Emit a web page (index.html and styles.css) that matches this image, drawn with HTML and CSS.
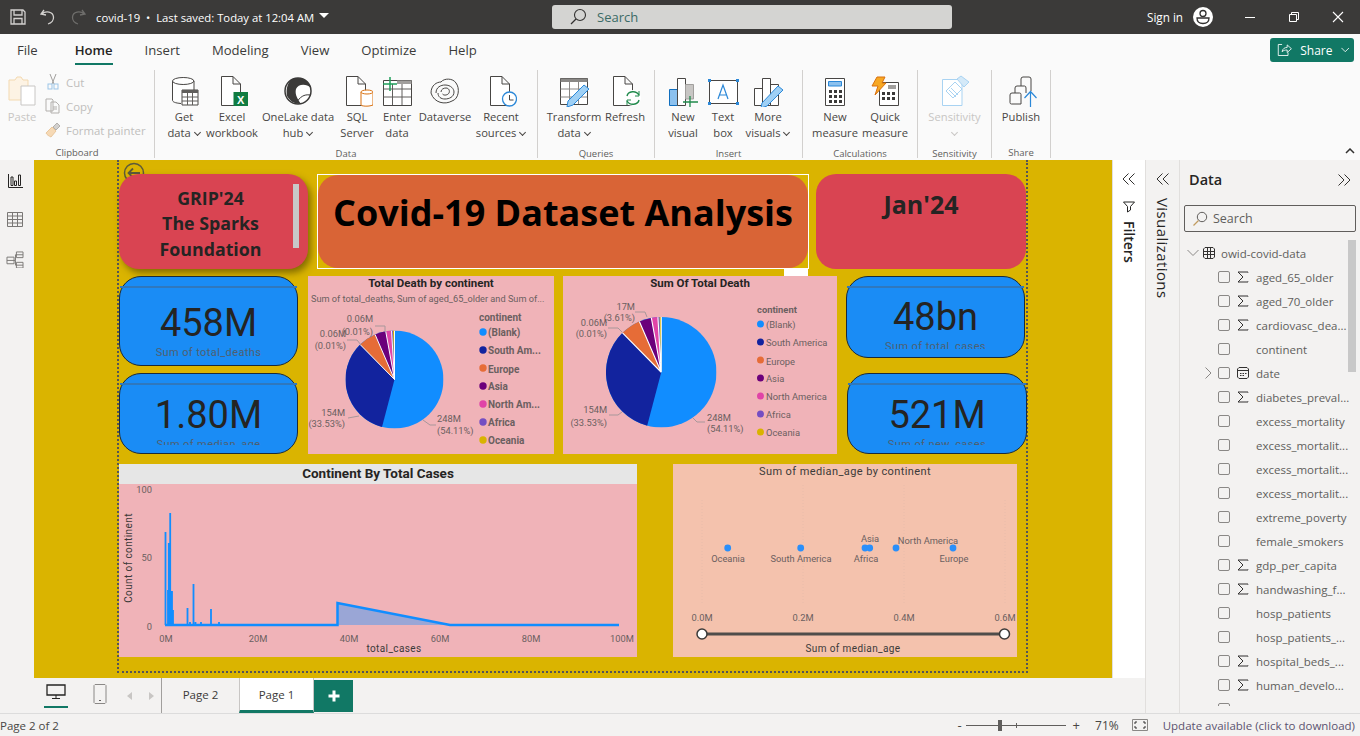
FILE: index.html
```html
<!DOCTYPE html>
<html lang="en">
<head>
  <meta charset="UTF-8" />
  <title>covid-19 - Power BI Desktop</title>
  <link rel="stylesheet" href="styles.css">
</head>
<body>
  <svg class="defs" width="0" height="0">
    <symbol id="pie" viewBox="-100 -100 200 200">
      <circle r="100" fill="#118dff"/>
      <path d="M0 0L-25.5 96.7A100 100 0 0 1-70.1-71.3Z" fill="#12239e"/>
      <path d="M0 0L-70.1-71.3A100 100 0 0 1-39.6-91.8Z" fill="#e66c37"/>
      <path d="M0 0L-39.6-91.8A100 100 0 0 1-17.9-98.4Z" fill="#6b007b"/>
      <path d="M0 0L-17.9-98.4A100 100 0 0 1-6.1-99.8Z" fill="#e044a7"/>
      <path d="M0 0L-6.1-99.8A100 100 0 0 1-3.1-99.9Z" fill="#744ec2"/>
      <path d="M0 0L-3.1-99.9A100 100 0 0 1 0-100Z" fill="#d9b300"/>
      <path d="M0-100V0M0 0L-70.1-71.3M0 0L-39.6-91.8M0 0L-17.9-98.4M0 0L-6.1-99.8" stroke="#fff" stroke-width="2" fill="none"/>
    </symbol>
    <symbol id="sigma" viewBox="0 0 12 12">
      <path d="M11 1.500V1H1L6 6L1 11H11V10.500" fill="none" stroke="#323130" stroke-width="1"/>
    </symbol>
    <symbol id="doc" viewBox="0 0 32 32">
      <path d="M4.500 1.500H16L23.500 9V30.500H4.500Z M16 1.500V9H23.500" fill="#fff" stroke="#484644"/>
    </symbol>
  </svg>

  <header class="titlebar">
    <div class="tb-left">
      <svg class="tb-icon" width="18" height="18" viewBox="0 0 18 18"><path d="M2 2H14L16 4V16H2ZM5 2V7H13V2M5 16V10.500H13V16" fill="none" stroke="#d2d0ce" stroke-width="1.300"/></svg>
      <svg class="tb-icon" width="18" height="18" viewBox="0 0 18 18"><path d="M5 2L2 6L7 7M2.500 6C7 2.500 14 3.500 14.500 9C14.800 12 12.500 15 9 16" fill="none" stroke="#d2d0ce" stroke-width="1.300"/></svg>
      <svg class="tb-icon" width="18" height="18" viewBox="0 0 18 18"><path d="M13 2L16 6L11 7M15.500 6C11 2.500 4 3.500 3.500 9C3.200 12 5.500 15 9 16" fill="none" stroke="#6e6d6b" stroke-width="1.300"/></svg>
      <span class="doc-name">covid-19 &nbsp;•&nbsp; Last saved: Today at 12:04 AM</span>
      <span class="caret"></span>
    </div>
    <div class="tb-search">
      <svg width="18" height="18" viewBox="0 0 18 18"><circle cx="11" cy="7" r="5.500" fill="none" stroke="#323130" stroke-width="1.100"/><path d="M7 11L2 16" stroke="#323130" stroke-width="1.300"/></svg>
      <span>Search</span>
    </div>
    <div class="tb-right">
      <span class="signin">Sign in</span>
      <svg class="avatar" width="20" height="20" viewBox="0 0 20 20"><circle cx="10" cy="10" r="10" fill="#fff"/><circle cx="10" cy="6.500" r="3" fill="none" stroke="#323130" stroke-width="1.300"/><path d="M4 11H16C16 15 13 16.500 10 16.500C7 16.500 4 15 4 11Z" fill="none" stroke="#323130" stroke-width="1.300"/></svg>
      <svg class="win-btn" width="12" height="12" viewBox="0 0 12 12"><path d="M1 6.500H11" stroke="#fff"/></svg>
      <svg class="win-btn" width="12" height="12" viewBox="0 0 12 12"><path d="M1.500 3.500H8.500V10.500H1.500ZM3.500 3.500V1.500H10.500V8.500H8.500" fill="none" stroke="#fff"/></svg>
      <svg class="win-btn" width="12" height="12" viewBox="0 0 12 12"><path d="M1 1L11 11M11 1L1 11" stroke="#fff" stroke-width="1.100"/></svg>
    </div>
  </header>

  <nav class="tabs">
    <span class="tab tab-file">File</span>
    <span class="tab tab-on">Home</span>
    <span class="tab">Insert</span>
    <span class="tab">Modeling</span>
    <span class="tab">View</span>
    <span class="tab">Optimize</span>
    <span class="tab">Help</span>
    <button class="share">
      <svg width="18" height="16" viewBox="0 0 18 16"><path d="M6 1.500H1.500V14.500H13V11M6 10C6.500 6.500 9 5 12 5V2L17 6.500L12 11V8C9.500 8 7.500 8.500 6 10Z" fill="none" stroke="#fff"/></svg>
      <span>Share</span>
      <svg width="10" height="6" viewBox="0 0 10 6"><path d="M.5.500L5 5L9.500.500" fill="none" stroke="#fff"/></svg>
    </button>
  </nav>

  <section class="ribbon">
    <div class="group group-clip">
      <div class="group-body clip-body">
        <div class="rb-btn off paste">
          <svg width="32" height="32" viewBox="0 0 32 32"><path d="M3 5H9L11 2H15L17 5H22V25H3Z" fill="#fdf3e4" stroke="#f3d9b0"/><path d="M15 11H29V30H15Z" fill="#fff" stroke="#c8c6c4"/></svg>
          <span>Paste</span>
        </div>
        <div class="small-list">
          <div class="small-btn"><svg width="16" height="18" viewBox="0 0 16 18"><path d="M5 1L9 11M11 1L7 11" stroke="#a19f9d" fill="none"/><rect x="3" y="11" width="4" height="5" fill="none" stroke="#9cc5e8"/><rect x="9" y="11" width="4" height="5" fill="none" stroke="#9cc5e8"/></svg><span>Cut</span></div>
          <div class="small-btn"><svg width="16" height="16" viewBox="0 0 16 16"><path d="M1 1H7L8 2V13H1ZM6 4H11L14 7V15H6Z M8 9H12M8 11H12" fill="#fafafa" stroke="#b3b0ad"/></svg><span>Copy</span></div>
          <div class="small-btn"><svg width="16" height="16" viewBox="0 0 16 16"><path d="M1 11L7 5L11 9L6 15C4 14 2 13 1 11Z" fill="#f6d9b5" stroke="#e9c79d"/><path d="M8 5L12 1L15 4L11 8Z" fill="#d2d0ce" stroke="#b3b0ad"/></svg><span>Format painter</span></div>
        </div>
      </div>
      <div class="group-name">Clipboard</div>
    </div>

    <div class="group group-data">
      <div class="group-body">
        <div class="rb-btn">
          <svg width="32" height="32" viewBox="0 0 32 32"><path d="M4.500 6V26H14V17H26V6Z" fill="#fff"/><path d="M4.500 6V25C4.500 27 7 28 13 28.500M26 6V15" fill="none" stroke="#484644"/><ellipse cx="15.200" cy="6" rx="10.700" ry="3.500" fill="#fff" stroke="#484644"/><path d="M14 15H30V30H14Z" fill="#fff" stroke="#484644"/><path d="M14 15H30V18H14Z" fill="#605e5c"/><path d="M19.500 18V30M24.500 18V30M14 22H30M14 26H30" stroke="#605e5c"/></svg>
          <span>Get</span><span>data <i class="chev"></i></span>
        </div>
        <div class="rb-btn">
          <svg width="32" height="32" viewBox="0 0 32 32"><use href="#doc" x="1"/><rect x="17.500" y="17" width="14.500" height="14" fill="#107c41"/><text x="24.700" y="28.500" class="xl-x">X</text></svg>
          <span>Excel</span><span>workbook</span>
        </div>
        <div class="rb-btn">
          <svg width="32" height="32" viewBox="0 0 32 32"><circle cx="16" cy="16" r="13" fill="#fff" stroke="#3b3a39" stroke-width="1.500"/><path d="M9 5C15 1 26 3 29 13C24 8 16 9 14 14C13 18 14 22 19 29C12 29 8 26 5 21C4 15 5 9 9 5Z" fill="#3b3a39"/><path d="M14 28C18 22 22 19 28 20" fill="none" stroke="#3b3a39"/></svg>
          <span>OneLake data</span><span>hub <i class="chev"></i></span>
        </div>
        <div class="rb-btn">
          <svg width="32" height="32" viewBox="0 0 32 32"><use href="#doc" x="1"/><path d="M20 17V30C20 31 27 32 32 30V17" fill="#fff" stroke="#d9700f"/><ellipse cx="26" cy="17" rx="6" ry="2" fill="#fff" stroke="#d9700f"/></svg>
          <span>SQL</span><span>Server</span>
        </div>
        <div class="rb-btn">
          <svg width="32" height="32" viewBox="0 0 32 32"><path d="M2.500 5.500H30.500V30.500H2.500Z" fill="#fff" stroke="#484644"/><path d="M11.500 9V30M21 5.500V30M2.500 14H30M2.500 22H30" stroke="#605e5c"/><path d="M16 5.500H30.500V9H16Z" fill="#a19f9d"/><path d="M9 2V16M2 9H16" stroke="#1e9e5a" stroke-width="1.500"/></svg>
          <span>Enter</span><span>data</span>
        </div>
        <div class="rb-btn">
          <svg width="32" height="32" viewBox="0 0 32 32"><g fill="none" stroke="#484644"><path d="M2 18C2 10 8 7 12 7C15 3 24 3 27 8C31 13 30 24 23 26C16 30 5 28 2 18Z"/><path d="M7 18C7 12 12 10 16 10C22 10 25 14 25 17C25 22 20 24 16 24C12 24 9 22 9 18"/><path d="M12 17C12 14 15 13 17 13C20 13 21 16 20 18C19 20 15 21 13.500 19"/></g></svg>
          <span>Dataverse</span>
        </div>
        <div class="rb-btn">
          <svg width="32" height="32" viewBox="0 0 32 32"><use href="#doc" x="1"/><circle cx="24.500" cy="24" r="7" fill="#fff" stroke="#2b88d8" stroke-width="1.300"/><path d="M24.500 20V25H28.500" fill="none" stroke="#484644"/></svg>
          <span>Recent</span><span>sources <i class="chev"></i></span>
        </div>
      </div>
      <div class="group-name">Data</div>
    </div>

    <div class="group group-queries">
      <div class="group-body">
        <div class="rb-btn">
          <svg width="32" height="32" viewBox="0 0 32 32"><path d="M2.500 3.500H29.500V29.500H2.500Z" fill="#fff" stroke="#484644"/><path d="M2.500 3.500H29.500V7H2.500Z" fill="#8a8886"/><path d="M11.500 7V29M20.500 7V29M2.500 14H29M2.500 22H29" stroke="#8a8886"/><path d="M10 26L26 10L31 14L15 30L9 32Z" fill="#9fd0f5" stroke="#2b88d8"/></svg>
          <span>Transform</span><span>data <i class="chev"></i></span>
        </div>
        <div class="rb-btn">
          <svg width="32" height="32" viewBox="0 0 32 32"><use href="#doc"/><circle cx="24" cy="23" r="7" fill="#fff" stroke="#fff" stroke-width="2"/><path d="M18 21C19 16 27 15 30 20M30 25C29 30 21 31 18 26" fill="none" stroke="#218a4c" stroke-width="1.400"/><path d="M30 16V21H26M18 30V25H22" fill="none" stroke="#218a4c"/></svg>
          <span>Refresh</span>
        </div>
      </div>
      <div class="group-name">Queries</div>
    </div>

    <div class="group group-insert">
      <div class="group-body">
        <div class="rb-btn">
          <svg width="32" height="32" viewBox="0 0 32 32"><path d="M2.500 14.500H10.500V30.500H2.500Z" fill="#8cc1ee" stroke="#106ebe"/><path d="M10.500 3.500H18.500V30.500H10.500Z" fill="#fff" stroke="#484644"/><path d="M18.500 9.500H26.500V24H18.500Z" fill="#c8c6c4" stroke="#a19f9d"/><path d="M23 21V33M16 27H31" stroke="#218a4c" stroke-width="1.300"/></svg>
          <span>New</span><span>visual</span>
        </div>
        <div class="rb-btn">
          <svg width="32" height="32" viewBox="0 0 32 32"><path d="M2.500 5.500H30.500V28.500H2.500Z" fill="#fff" stroke="#484644"/><path d="M1 4H4V7H1ZM29 4H32V7H29ZM1 27H4V30H1ZM29 27H32V30H29Z" fill="#2b88d8"/><path d="M11 24L16 10L21 24M12.500 20H19.500" fill="none" stroke="#2b88d8" stroke-width="1.200"/></svg>
          <span>Text</span><span>box</span>
        </div>
        <div class="rb-btn">
          <svg width="32" height="32" viewBox="0 0 32 32"><path d="M2.500 13.500H10.500V30.500H2.500ZM10.500 3.500H18.500V30.500H10.500ZM18.500 9.500H26.500V30.500H18.500Z" fill="#fff" stroke="#484644"/><path d="M10 28L26 11L31 15L15 31L9 33Z" fill="#9fd0f5" stroke="#2b88d8"/></svg>
          <span>More</span><span>visuals <i class="chev"></i></span>
        </div>
      </div>
      <div class="group-name">Insert</div>
    </div>

    <div class="group group-calc">
      <div class="group-body">
        <div class="rb-btn">
          <svg width="32" height="32" viewBox="0 0 32 32"><path d="M6.500 3.500H25.500V30.500H6.500Z" fill="#fff" stroke="#484644"/><path d="M9.500 6.500H22.500V11H9.500Z" fill="#8cc1ee" stroke="#2b88d8"/><path d="M10 15H13V18H10ZM15 15H18V18H15ZM20 15H23V18H20ZM10 20H13V23H10ZM15 20H18V23H15ZM20 20H23V23H20ZM10 25H13V28H10ZM15 25H18V28H15ZM20 25H23V28H20Z" fill="#3b3a39"/></svg>
          <span>New</span><span>measure</span>
        </div>
        <div class="rb-btn">
          <svg width="32" height="32" viewBox="0 0 32 32"><path d="M10.500 7.500H29.500V30.500H10.500Z" fill="#fff" stroke="#484644"/><path d="M19 10H27V14H19Z" fill="#a19f9d"/><path d="M13 17H16V20H13ZM18 17H21V20H18ZM23 17H26V20H23ZM13 22H16V25H13ZM18 22H21V25H18ZM23 22H26V25H23Z" fill="#3b3a39"/><path d="M8 2H16L13 8H17L6 20L9 11H3Z" fill="#f7a823" stroke="#d9700f"/></svg>
          <span>Quick</span><span>measure</span>
        </div>
      </div>
      <div class="group-name">Calculations</div>
    </div>

    <div class="group group-sens">
      <div class="group-body">
        <div class="rb-btn off">
          <svg width="32" height="32" viewBox="0 0 32 32"><path d="M3.500 4.500H23V30.500H3.500Z" fill="#fff" stroke="#a9d3f2"/><path d="M7 16L16 7L23 14L14 23ZM10 15L17 22M12 13L19 20" fill="none" stroke="#a9d3f2"/><path d="M18 4L22 1L30 7L25 12Z" fill="#d4e9f8" stroke="#a9d3f2"/></svg>
          <span>Sensitivity</span><span><i class="chev"></i></span>
        </div>
      </div>
      <div class="group-name">Sensitivity</div>
    </div>

    <div class="group group-share">
      <div class="group-body">
        <div class="rb-btn">
          <svg width="32" height="32" viewBox="0 0 32 32"><path d="M7 18H14.500Q16 18 16 19.500V29H6.500Q5 29 5 27.500V20Q5 18 7 18ZM10 18V13Q10 11 12 11H19.500Q21 11 21 13V18M16 11V4Q16 2 18 2H24Q26 2 26 4V16" fill="none" stroke="#484644"/><path d="M25.500 32V17M19.500 23L25.500 16.500L31.500 23" fill="none" stroke="#2b88d8" stroke-width="1.200"/></svg>
          <span>Publish</span>
        </div>
      </div>
      <div class="group-name">Share</div>
    </div>

    <svg class="collapse" width="10" height="6" viewBox="0 0 10 6"><path d="M1 5L5 1L9 5" fill="none" stroke="#323130" stroke-width="1.500"/></svg>
  </section>

  <main class="workspace">
    <div class="report-area">
      <div class="report-row">
        <aside class="rail">
          <svg width="15" height="14" viewBox="0 0 15 14"><path d="M.5 0V13.500H15M3 3H5V11.500H3ZM6.500 7H8.500V11.500H6.500ZM10.500 1H12.500V11.500H10.500Z" fill="none" stroke="#252423"/></svg>
          <svg width="16" height="15" viewBox="0 0 16 15"><path d="M.5.500H15.500V14.500H.5ZM.5 4H15.500M.5 7.500H15.500M.5 11H15.500M5.500.5V14.500M10.500.5V14.500" fill="none" stroke="#797775"/></svg>
          <svg width="18" height="17" viewBox="0 0 18 18"><path d="M.5 6.500H8V13.500H.5ZM.5 10H8M10.500 1H17.500V7H10.500ZM10.500 4H17.500M10.500 12H17.500V18H10.500ZM10.500 15H17.500M8 10H9.500V4H10.500M9.500 10V15H10.500" fill="none" stroke="#797775"/></svg>
        </aside>

        <div class="canvas">
          <div class="report">
            <svg class="back-btn" width="22" height="22" viewBox="0 0 22 22"><circle cx="11" cy="11" r="9.500" fill="none" stroke="#5c5a3a" stroke-width="1.500"/><path d="M17 11H6M10 6.500L5.500 11L10 15.500" fill="none" stroke="#5c5a3a" stroke-width="1.800"/></svg>

            <div class="row row-top">
              <div class="banner banner-grip">
                <p>GRIP'24</p>
                <p>The Sparks</p>
                <p>Foundation</p>
                <span class="scroll-thumb"></span>
              </div>
              <div class="banner-title">
                <h1>Covid-19 Dataset Analysis</h1>
                <span class="resize-tab"></span>
              </div>
              <div class="banner banner-date"><p>Jan'24</p></div>
            </div>

            <div class="row row-mid">
              <div class="kpi-col kpi-col-l">
                <div class="kpi kpi-a"><div class="kpi-body"><div class="kpi-num">458M</div><div class="kpi-label">Sum of total_deaths</div></div></div>
                <div class="kpi kpi-b"><div class="kpi-body"><div class="kpi-num">1.80M</div><div class="kpi-label">Sum of median_age</div></div></div>
              </div>

              <svg class="panel panel-pie1" viewBox="308 276 246 178" width="246" height="178">
                <text x="431" y="287" class="ch-title">Total Death by continent</text>
                <text x="311" y="302" class="ch-sub">Sum of total_deaths, Sum of aged_65_older and Sum of...</text>
                <use href="#pie" x="345.500" y="330.500" width="98" height="98"/>
                <g class="leader">
                  <path d="M375 326H385V332"/><path d="M347 340H357L361 345"/>
                  <path d="M348 418L359 416"/><path d="M423 420L430 425H436"/>
                </g>
                <g class="lbl lbl-end">
                  <text x="373" y="322">0.06M</text><text x="373" y="335">(0.01%)</text>
                  <text x="346" y="337">0.06M</text><text x="346" y="349">(0.01%)</text>
                  <text x="345" y="416">154M</text><text x="345" y="427">(33.53%)</text>
                </g>
                <g class="lbl">
                  <text x="437" y="422">248M</text><text x="437" y="434">(54.11%)</text>
                </g>
                <g class="legend legend-bold">
                  <text x="479" y="321" class="lg-head">continent</text>
                  <circle cx="483" cy="332" r="3.700" fill="#118dff"/><text x="488" y="336">(Blank)</text>
                  <circle cx="483" cy="350" r="3.700" fill="#12239e"/><text x="488" y="354">South Am...</text>
                  <circle cx="483" cy="368" r="3.700" fill="#e66c37"/><text x="488" y="373">Europe</text>
                  <circle cx="483" cy="386" r="3.700" fill="#6b007b"/><text x="488" y="390">Asia</text>
                  <circle cx="483" cy="404" r="3.700" fill="#e044a7"/><text x="488" y="408">North Am...</text>
                  <circle cx="483" cy="422" r="3.700" fill="#744ec2"/><text x="488" y="426">Africa</text>
                  <circle cx="483" cy="440" r="3.700" fill="#d9b300"/><text x="488" y="444">Oceania</text>
                </g>
              </svg>

              <svg class="panel panel-pie2" viewBox="563 276 274 178" width="274" height="178">
                <text x="700" y="287" class="ch-title">Sum Of Total Death</text>
                <use href="#pie" x="606" y="317" width="110.500" height="110.500"/>
                <g class="leader">
                  <path d="M635 312H645L647 317"/><path d="M608 328H618L622 332"/>
                  <path d="M609 415H618L622 412"/><path d="M693 418L697 422H705"/>
                </g>
                <g class="lbl lbl-end">
                  <text x="635" y="310">17M</text><text x="635" y="321">(3.61%)</text>
                  <text x="607" y="326">0.06M</text><text x="607" y="337">(0.01%)</text>
                  <text x="607" y="413">154M</text><text x="607" y="426">(33.53%)</text>
                </g>
                <g class="lbl">
                  <text x="707" y="421">248M</text><text x="707" y="432">(54.11%)</text>
                </g>
                <g class="legend legend-plain">
                  <text x="757" y="313" class="lg-head">continent</text>
                  <circle cx="760.500" cy="324" r="3.500" fill="#118dff"/><text x="766" y="328">(Blank)</text>
                  <circle cx="760.500" cy="342" r="3.500" fill="#12239e"/><text x="766" y="346">South America</text>
                  <circle cx="760.500" cy="360" r="3.500" fill="#e66c37"/><text x="766" y="365">Europe</text>
                  <circle cx="760.500" cy="378" r="3.500" fill="#6b007b"/><text x="766" y="382">Asia</text>
                  <circle cx="760.500" cy="396" r="3.500" fill="#e044a7"/><text x="766" y="400">North America</text>
                  <circle cx="760.500" cy="414" r="3.500" fill="#744ec2"/><text x="766" y="418">Africa</text>
                  <circle cx="760.500" cy="432" r="3.500" fill="#d9b300"/><text x="766" y="436">Oceania</text>
                </g>
              </svg>

              <div class="kpi-col kpi-col-r">
                <div class="kpi kpi-c"><div class="kpi-body"><div class="kpi-num">48bn</div><div class="kpi-label">Sum of total_cases</div></div></div>
                <div class="kpi kpi-d"><div class="kpi-body"><div class="kpi-num">521M</div><div class="kpi-label">Sum of new_cases</div></div></div>
              </div>
            </div>

            <div class="row row-bottom">
              <div class="line-card">
                <div class="line-head">Continent By Total Cases</div>
                <svg class="line-plot" viewBox="119 484 518 173" width="518" height="173">
                  <g class="lbl lbl-end">
                    <text x="152" y="493">100</text><text x="152" y="561">50</text><text x="152" y="630">0</text>
                  </g>
                  <text transform="translate(132 558) rotate(-90)" class="axis-name">Count of continent</text>
                  <path d="M337.500 603L450 625H337.500Z" fill="#9aa6d6"/>
                  <path d="M165.500 625V532M168 625V590M168.800 625V543M170.200 625V513M172 625V591M173 625V610M187.500 625V608M190 625V622M193.500 625V584M195.500 625V622M201 625V622M211 625V609M219 625V622" fill="none" stroke="#118dff" stroke-width="1.800"/>
                  <path d="M165 625H337.500V603L450 625H619" fill="none" stroke="#118dff" stroke-width="2.500"/>
                  <g class="lbl lbl-mid">
                    <text x="166" y="642">0M</text><text x="258" y="642">20M</text><text x="349" y="642">40M</text><text x="440" y="642">60M</text><text x="531" y="642">80M</text><text x="622" y="642">100M</text>
                  </g>
                  <text x="394" y="652" class="axis-name">total_cases</text>
                </svg>
              </div>

              <svg class="scatter" viewBox="673 464 344 193" width="344" height="193">
                <text x="845" y="475" class="scatter-title">Sum of median_age by continent</text>
                <path d="M702 500V605M803 485V605M904 485V605M1005 500V605" class="grid-dots"/>
                <g fill="#2a8ffa">
                  <circle cx="727.700" cy="548" r="3.400"/><circle cx="800.700" cy="548" r="3.400"/><circle cx="865" cy="548" r="3.400"/><circle cx="869.700" cy="548" r="3.400"/><circle cx="896" cy="548" r="3.400"/><circle cx="953" cy="548" r="3.400"/>
                </g>
                <g class="lbl lbl-mid">
                  <text x="728" y="562">Oceania</text><text x="801" y="562">South America</text><text x="866" y="562">Africa</text><text x="870" y="542">Asia</text><text x="928" y="544">North America</text><text x="954" y="562">Europe</text>
                  <text x="702" y="621">0.0M</text><text x="803" y="621">0.2M</text><text x="904" y="621">0.4M</text><text x="1005" y="621">0.6M</text>
                </g>
                <path d="M702 634H1004" stroke="#4f4d4b" stroke-width="3"/>
                <circle cx="702" cy="634" r="5" fill="#fff" stroke="#3b3a39" stroke-width="1.500"/>
                <circle cx="1004.500" cy="634" r="5" fill="#fff" stroke="#3b3a39" stroke-width="1.500"/>
                <text x="853" y="652" class="axis-name">Sum of median_age</text>
              </svg>
            </div>
          </div>
        </div>

        <aside class="filters">
          <svg class="dbl" width="14" height="12" viewBox="0 0 14 12"><path d="M6.500.5L1 6L6.500 11.500M12.500.5L7 6L12.500 11.500" fill="none" stroke="#323130"/></svg>
          <svg class="funnel" width="12" height="12" viewBox="0 0 12 12"><path d="M.5 1H11.500L7.500 5.500V9L4.500 11V5.500Z" fill="none" stroke="#252423"/></svg>
          <span class="side-label">Filters</span>
        </aside>
      </div>

      <div class="pagebar">
        <div class="view-switch view-on">
          <svg width="20" height="16" viewBox="0 0 20 16"><path d="M1 1H19V11H1Z" fill="none" stroke="#252423" stroke-width="1.300"/><path d="M10 11V14M6 14.500H14" stroke="#252423"/></svg>
        </div>
        <div class="view-switch">
          <svg width="14" height="20" viewBox="0 0 14 20"><path d="M2 .5H12L13 1.500V18.500L12 19.500H2L1 18.500V1.500Z" fill="none" stroke="#8a8886"/><path d="M6 16H8V17H6Z" fill="#605e5c"/></svg>
        </div>
        <div class="page-arrows"><i class="arrow-l"></i><i class="arrow-r"></i></div>
        <div class="page-tab">Page 2</div>
        <div class="page-tab page-tab-on">Page 1</div>
        <div class="page-add">
          <svg width="12" height="12" viewBox="0 0 12 12"><path d="M6 .5V11.500M.5 6H11.500" stroke="#fff" stroke-width="3"/></svg>
        </div>
      </div>
    </div>

    <aside class="viz-pane">
      <svg class="dbl" width="14" height="12" viewBox="0 0 14 12"><path d="M6.500.5L1 6L6.500 11.500M12.500.5L7 6L12.500 11.500" fill="none" stroke="#323130"/></svg>
      <span class="side-label">Visualizations</span>
    </aside>

    <aside class="data-pane">
      <div class="data-head">
        <span>Data</span>
        <svg width="14" height="12" viewBox="0 0 14 12"><path d="M1.500.5L7 6L1.500 11.500M7.500.5L13 6L7.500 11.500" fill="none" stroke="#323130"/></svg>
      </div>
      <div class="data-search">
        <svg width="16" height="16" viewBox="0 0 16 16"><circle cx="10" cy="6" r="4.700" fill="none" stroke="#605e5c"/><path d="M6.500 9.500L1.500 14.500" stroke="#c19c5f" stroke-width="1.200"/></svg>
        <span>Search</span>
      </div>
      <div class="tree">
        <div class="tree-root">
          <svg width="12" height="8" viewBox="0 0 12 8"><path d="M.5 1L6 6.500L11.500 1" fill="none" stroke="#8a8886"/></svg>
          <svg width="12" height="12" viewBox="0 0 12 12"><path d="M2 .5H10L11.500 2V10L10 11.500H2L.5 10V2ZM4.500.5V11.500M7.500.5V11.500M.5 4.500H11.500M.5 7.500H11.500" fill="none" stroke="#323130"/></svg>
          <span>owid-covid-data</span>
        </div>
        <div class="field"><i></i><b class="box"></b><svg class="fi" width="12" height="12"><use href="#sigma"/></svg><span>aged_65_older</span></div>
        <div class="field"><i></i><b class="box"></b><svg class="fi" width="12" height="12"><use href="#sigma"/></svg><span>aged_70_older</span></div>
        <div class="field"><i></i><b class="box"></b><svg class="fi" width="12" height="12"><use href="#sigma"/></svg><span>cardiovasc_dea...</span></div>
        <div class="field"><i></i><b class="box"></b><u></u><span>continent</span></div>
        <div class="field">
          <i><svg width="7" height="12" viewBox="0 0 7 12"><path d="M.5.5L6 6L.5 11.500" fill="none" stroke="#8a8886"/></svg></i>
          <b class="box"></b>
          <svg class="fi" width="12" height="12" viewBox="0 0 12 12"><path d="M2 .5H10L11.500 2V10L10 11.500H2L.5 10V2ZM.5 3.500H11.500" fill="none" stroke="#323130"/><path d="M3 6H4.500V7H3ZM5.500 6H7V7H5.500ZM8 6H9.500V7H8ZM3 8H4.500V9H3ZM5.500 8H7V9H5.500Z" fill="#323130"/></svg>
          <span>date</span>
        </div>
        <div class="field"><i></i><b class="box"></b><svg class="fi" width="12" height="12"><use href="#sigma"/></svg><span>diabetes_preval...</span></div>
        <div class="field"><i></i><b class="box"></b><u></u><span>excess_mortality</span></div>
        <div class="field"><i></i><b class="box"></b><u></u><span>excess_mortalit...</span></div>
        <div class="field"><i></i><b class="box"></b><u></u><span>excess_mortalit...</span></div>
        <div class="field"><i></i><b class="box"></b><u></u><span>excess_mortalit...</span></div>
        <div class="field"><i></i><b class="box"></b><u></u><span>extreme_poverty</span></div>
        <div class="field"><i></i><b class="box"></b><u></u><span>female_smokers</span></div>
        <div class="field"><i></i><b class="box"></b><svg class="fi" width="12" height="12"><use href="#sigma"/></svg><span>gdp_per_capita</span></div>
        <div class="field"><i></i><b class="box"></b><svg class="fi" width="12" height="12"><use href="#sigma"/></svg><span>handwashing_f...</span></div>
        <div class="field"><i></i><b class="box"></b><u></u><span>hosp_patients</span></div>
        <div class="field"><i></i><b class="box"></b><u></u><span>hosp_patients_...</span></div>
        <div class="field"><i></i><b class="box"></b><svg class="fi" width="12" height="12"><use href="#sigma"/></svg><span>hospital_beds_...</span></div>
        <div class="field"><i></i><b class="box"></b><svg class="fi" width="12" height="12"><use href="#sigma"/></svg><span>human_develo...</span></div>
        <div class="field"><i></i><b class="box"></b><u></u><span></span></div>
      </div>
      <span class="tree-scroll"></span>
    </aside>
  </main>

  <footer class="statusbar">
    <span>Page 2 of 2</span>
    <div class="status-right">
      <span class="zoom-minus">-</span>
      <div class="zoom-track"><i class="zoom-tick"></i><i class="zoom-thumb"></i></div>
      <span class="zoom-plus">+</span>
      <span class="zoom-val">71%</span>
      <svg width="16" height="12" viewBox="0 0 16 12"><path d="M.5.5H15.500V11.500H.5Z" fill="none" stroke="#8a8886"/><path d="M5 3H3V5M11 3H13V5M5 9H3V7M11 9H13V7" fill="none" stroke="#323130"/></svg>
      <span class="update">Update available (click to download)</span>
    </div>
  </footer>
</body>
</html>
```

FILE: styles.css
```css
* {
  box-sizing: border-box;
}

html, body {
  margin: 0;
  height: 736px;
  overflow: hidden;
}

body {
  font-family: "Open Sans", "Noto Sans", sans-serif;
  font-size: 12px;
  color: #252423;
  background: #f3f2f1;
}

p, h1 {
  margin: 0;
}

.defs {
  position: absolute;
}

/* title bar */
.titlebar {
  display: flex;
  align-items: center;
  height: 34px;
  background: #3b3a39;
  color: #fff;
}

.tb-left {
  display: flex;
  align-items: center;
  width: 552px;
  padding-left: 9px;
}

.tb-icon {
  margin-right: 12px;
}

.doc-name {
  margin-left: -3px;
  font-size: 11.3px;
  white-space: nowrap;
}

.caret {
  width: 0;
  height: 0;
  margin: -3px 0 0 5px;
  border-left: 5px solid transparent;
  border-right: 5px solid transparent;
  border-top: 5px solid #fff;
}

.tb-search {
  display: flex;
  align-items: center;
  gap: 10px;
  width: 400px;
  height: 24px;
  padding-left: 17px;
  background: #d4d4d2;
  border-radius: 3px;
  color: #3b6b66;
  font-size: 13px;
}

.tb-right {
  display: flex;
  align-items: center;
  flex: 1;
  padding-left: 195px;
}

.signin {
  font-size: 11.7px;
  white-space: nowrap;
}

.avatar {
  margin-left: 10px;
  flex: none;
}

.win-btn {
  margin-left: 32px;
  flex: none;
}

.avatar + .win-btn {
  margin-left: 31px;
}

/* tabs */
.tabs {
  display: flex;
  align-items: flex-start;
  gap: 32px;
  height: 34px;
  padding: 6px 6px 0 17px;
  background: #fafafa;
}

.tab {
  height: 25px;
  line-height: 20px;
  font-size: 13.1px;
  color: #3b3a39;
}

.tab-file {
  margin-right: 5px;
}

.tab-on {
  color: #252423;
  font-weight: 600;
  border-bottom: 2px solid #117865;
}

.share {
  display: flex;
  align-items: center;
  gap: 8px;
  margin: -2px 0 0 auto;
  width: 84px;
  height: 24px;
  padding: 0 5px 0 7px;
  border: 0;
  border-radius: 3px;
  background: #117865;
  color: #fff;
  font: 12px "Open Sans", sans-serif;
}

/* ribbon */
.ribbon {
  position: relative;
  display: flex;
  height: 92px;
  padding-top: 2px;
  background: #fafafa;
}

.group {
  display: flex;
  flex-direction: column;
  height: 88px;
  border-right: 1px solid #d2d0ce;
}

.group-body {
  flex: 1;
  display: grid;
  grid-auto-flow: column;
  align-items: start;
  padding-top: 5px;
}

.group-name {
  height: 18px;
  line-height: 26px;
  text-align: center;
  font-size: 9.5px;
  color: #605e5c;
}

.group-clip { width: 155px; }
.group-data { width: 383px; }
.group-queries { width: 117px; }
.group-insert { width: 148px; }
.group-calc { width: 115px; }
.group-sens { width: 74px; }
.group-share { width: 59px; }

.group-data .group-body {
  grid-template-columns: 38px 58px 74px 44px 36px 60px 52px;
  padding-left: 10px;
}

.group-queries .group-body {
  grid-template-columns: 72px 30px;
}

.group-insert .group-body {
  grid-template-columns: 40px 40px 50px;
  padding-left: 8px;
}

.group-calc .group-body {
  grid-template-columns: 50px 50px;
  padding-left: 7px;
}

.group-sens .group-body {
  grid-template-columns: 73px;
}

.group-share .group-body {
  grid-template-columns: 58px;
}

.clip-body {
  display: flex;
  padding-left: 6px;
}

.rb-btn {
  display: flex;
  flex-direction: column;
  align-items: center;
  line-height: 16px;
  font-size: 11.2px;
  color: #484644;
  white-space: nowrap;
}

.rb-btn svg {
  flex: none;
  margin-bottom: 2px;
}

.rb-btn.off {
  color: #c8c6c4;
}

.xl-x {
  font: 700 11px "Liberation Sans", sans-serif;
  fill: #fff;
  text-anchor: middle;
}

.paste {
  width: 32px;
}

.chev {
  display: inline-block;
  width: 5px;
  height: 5px;
  margin: 0 1px 2px 1px;
  border-right: 1px solid currentColor;
  border-bottom: 1px solid currentColor;
  transform: rotate(45deg);
}

.small-list {
  display: flex;
  flex-direction: column;
  gap: 6px;
  margin: -2px 0 0 7px;
  color: #c0bebc;
  font-size: 11.4px;
}

.small-btn {
  display: flex;
  align-items: center;
  gap: 5px;
  height: 18px;
  white-space: nowrap;
}

.collapse {
  position: absolute;
  right: 5px;
  bottom: 6px;
}

/* workspace */
.workspace {
  display: flex;
  height: 553px;
}

.report-area {
  width: 1145px;
  display: flex;
  flex-direction: column;
}

.report-row {
  display: flex;
  height: 518px;
}

.rail {
  display: flex;
  flex-direction: column;
  align-items: center;
  gap: 24px;
  width: 34px;
  padding: 14px 4px 0 0;
  background: #f3f2f1;
}

.canvas {
  width: 1078px;
  padding-left: 83px;
  background: #dab400;
  overflow: hidden;
}

.report {
  position: relative;
  width: 911px;
  height: 513px;
  padding-top: 14px;
  border-left: 2px dotted #555;
  border-right: 2px dotted #555;
  border-bottom: 2px dotted #555;
}

.back-btn {
  position: absolute;
  left: 4px;
  top: 2px;
}

.row {
  position: relative;
  display: flex;
}

.row-top {
  height: 95px;
  margin-bottom: 7px;
}

.row-mid {
  height: 178px;
  margin-bottom: 10px;
}

.row-bottom {
  height: 193px;
  gap: 36px;
}

.banner {
  position: relative;
  border-radius: 20px;
  background: #d94452;
  font-weight: 700;
  text-align: center;
  color: #252423;
}

.banner-grip {
  width: 189px;
  margin-right: 9px;
  padding: 12px 6px 0 0;
  font-size: 17.8px;
  line-height: 25.4px;
  box-shadow: 3px 4px 7px rgba(60, 50, 0, 0.55);
}

.banner-date {
  width: 210px;
  padding-top: 13px;
  font-size: 25px;
  line-height: 34px;
}

.scroll-thumb {
  position: absolute;
  right: 9px;
  top: 10px;
  width: 6px;
  height: 64px;
  background: #c8c8c8;
}

.banner-title {
  position: relative;
  width: 492px;
  margin-right: 7px;
  border: 1px solid #fff;
}

.banner-title h1 {
  height: 100%;
  padding-top: 12px;
  border-radius: 20px;
  background: #d96436;
  font-size: 36px;
  line-height: 52px;
  font-weight: 700;
  text-align: center;
  color: #000;
  white-space: nowrap;
}

.resize-tab {
  position: absolute;
  right: 0;
  bottom: -8px;
  width: 24px;
  height: 7px;
  background: #fff;
}

/* kpi cards */
.kpi-col {
  display: flex;
  flex-direction: column;
  justify-content: space-between;
  width: 180px;
}

.kpi-col-l {
  width: 179px;
  margin-right: 10px;
}

.kpi-col-r {
  margin-left: 9px;
}

.kpi {
  width: 179px;
  background: #1a8cf5;
  border: 1px solid #1b2a38;
  border-radius: 22px;
  text-align: center;
}

.kpi::before {
  content: "";
  display: block;
  height: 2px;
  margin-top: 9px;
  background: #2f78bd;
}

.kpi-body {
  overflow: hidden;
}

.kpi-num {
  height: 44px;
  line-height: 44px;
  font-family: Roboto, sans-serif;
  font-size: 38px;
  color: #252423;
}

.kpi-label {
  height: 16px;
  line-height: 16px;
  font-family: Roboto, sans-serif;
  font-size: 11px;
  letter-spacing: 0.4px;
  color: #4f5f70;
}

.kpi-a { height: 90px; }
.kpi-a .kpi-body { margin-top: 13px; height: 60px; }
.kpi-b { height: 81px; }
.kpi-b .kpi-body { margin-top: 8px; height: 52px; }
.kpi-c { height: 82px; }
.kpi-c .kpi-body { margin-top: 7px; height: 54px; }
.kpi-d { height: 81px; width: 180px; margin-left: 1px; }
.kpi-d .kpi-body { margin-top: 8px; height: 52px; }

/* charts */
.panel {
  flex: none;
  background: #f0b3b8;
}

.panel-pie1 {
  margin-right: 9px;
}

.ch-title {
  font: 700 11.5px Roboto, sans-serif;
  fill: #252423;
  text-anchor: middle;
}

.ch-sub {
  font: 9.2px Roboto, sans-serif;
  fill: #6b5f60;
}

.lbl {
  font: 9.3px Roboto, sans-serif;
  fill: #6b5f60;
}

.lbl-end {
  text-anchor: end;
}

.lbl-mid {
  text-anchor: middle;
}

.leader {
  fill: none;
  stroke: #a8979a;
}

.legend {
  font: 10px Roboto, sans-serif;
  fill: #6b5f60;
}

.legend-bold {
  font-weight: 700;
}

.legend-plain {
  font-size: 9.4px;
}

.lg-head {
  font-weight: 700;
}

.line-card {
  width: 518px;
  background: #f0b3b8;
}

.line-head {
  height: 20px;
  background: #e6e6e6;
  text-align: center;
  font: 700 13.5px/18px Roboto, sans-serif;
}

.line-plot {
  display: block;
}

.axis-name {
  font: 10px Roboto, sans-serif;
  letter-spacing: 0.4px;
  fill: #3b3a39;
  text-anchor: middle;
}

.scatter {
  flex: none;
  background: #f4c2ad;
}

.scatter-title {
  font: 11px Roboto, sans-serif;
  letter-spacing: 0.4px;
  fill: #3b3a39;
  text-anchor: middle;
}

.grid-dots {
  fill: none;
  stroke: #e8bcaa;
  stroke-dasharray: 1 2;
}

/* side panes */
.filters {
  display: flex;
  flex-direction: column;
  align-items: center;
  width: 33px;
  padding-top: 13px;
  background: #fff;
  border-left: 1px solid #e1dfdd;
}

.funnel {
  margin-top: 16px;
}

.side-label {
  writing-mode: vertical-rl;
  font-size: 14px;
  font-weight: 600;
  color: #252423;
  margin-top: 8px;
}

.viz-pane {
  display: flex;
  flex-direction: column;
  align-items: center;
  width: 34px;
  padding-top: 13px;
  border-left: 1px solid #e1dfdd;
  background: #f3f2f1;
}

.viz-pane .side-label {
  margin-top: 13px;
  font-size: 15px;
  letter-spacing: 0.4px;
  font-weight: 400;
}

.data-pane {
  position: relative;
  flex: 1;
  border-left: 1px solid #e1dfdd;
  background: #f3f2f1;
}

.data-head {
  display: flex;
  align-items: center;
  justify-content: space-between;
  height: 45px;
  padding: 0 9px 6px 9px;
  font-size: 14.5px;
  font-weight: 600;
}

.data-search {
  display: flex;
  align-items: center;
  gap: 5px;
  width: 172px;
  height: 27px;
  margin-left: 4px;
  padding-left: 7px;
  border: 1px solid #605e5c;
  border-radius: 2px;
  font-size: 12.5px;
  color: #605e5c;
}

.tree {
  height: 465px;
  margin-top: 9px;
  overflow: hidden;
  color: #605e5c;
  font-size: 11.5px;
}

.tree-root {
  display: flex;
  align-items: center;
  gap: 4px;
  height: 24px;
  padding-left: 7px;
}

.tree-root span {
  margin-left: 2px;
}

.field {
  display: grid;
  grid-template-columns: 18px 12px 26px 1fr;
  align-items: center;
  height: 24px;
  padding-left: 20px;
  white-space: nowrap;
}

.field i {
  display: flex;
  align-items: center;
  padding-left: 5px;
}

.box {
  width: 12px;
  height: 12px;
  border: 1px solid #8a8886;
  border-radius: 2px;
}

.fi {
  justify-self: center;
}

.tree-scroll {
  position: absolute;
  right: 4px;
  top: 80px;
  width: 8px;
  height: 132px;
  background: #c8c8c8;
}

/* page tabs */
.pagebar {
  display: flex;
  align-items: stretch;
  height: 35px;
  background: #f3f2f1;
  padding-left: 44px;
}

.view-switch {
  display: flex;
  justify-content: center;
  width: 24px;
  padding-top: 6px;
  margin-right: 20px;
}

.view-on {
  border-bottom: 2px solid #117865;
  height: 30px;
}

.page-arrows {
  display: flex;
  align-items: center;
  gap: 17px;
  width: 35px;
  margin-left: -5px;
  border-right: 1px solid #a19f9d;
}

.page-arrows i {
  width: 0;
  height: 0;
  border-top: 4px solid transparent;
  border-bottom: 4px solid transparent;
}

.arrow-l {
  border-right: 5px solid #c8c6c4;
}

.arrow-r {
  border-left: 5px solid #c8c6c4;
}

.page-tab {
  width: 77px;
  line-height: 34px;
  text-align: center;
  font-size: 11.5px;
  color: #3b3a39;
}

.page-tab-on {
  width: 75px;
  background: #fff;
  border-left: 1px solid #c8c6c4;
  border-right: 1px solid #c8c6c4;
  border-bottom: 3px solid #117865;
}

.page-add {
  display: flex;
  align-items: center;
  justify-content: center;
  width: 39px;
  height: 32px;
  margin-top: 2px;
  background: #117865;
}

/* status bar */
.statusbar {
  display: flex;
  align-items: center;
  justify-content: space-between;
  height: 23px;
  border-top: 1px solid #dcdcdc;
  background: #f3f2f1;
  font-size: 11.5px;
  color: #484644;
  white-space: nowrap;
}

.status-right {
  display: flex;
  align-items: center;
  padding-right: 5px;
}

.zoom-track {
  position: relative;
  width: 100px;
  height: 1px;
  margin: 0 7px 0 4px;
  background: #605e5c;
}

.zoom-thumb {
  position: absolute;
  left: 32px;
  top: -5px;
  width: 4px;
  height: 11px;
  background: #605e5c;
}

.zoom-tick {
  position: absolute;
  left: 50px;
  top: -2px;
  width: 1px;
  height: 5px;
  background: #605e5c;
}

.zoom-minus, .zoom-plus {
  font-size: 13px;
}

.zoom-val {
  margin: 0 13px 0 15px;
  font-size: 12px;
}

.update {
  margin-left: 15px;
  color: #5c5470;
}
```
